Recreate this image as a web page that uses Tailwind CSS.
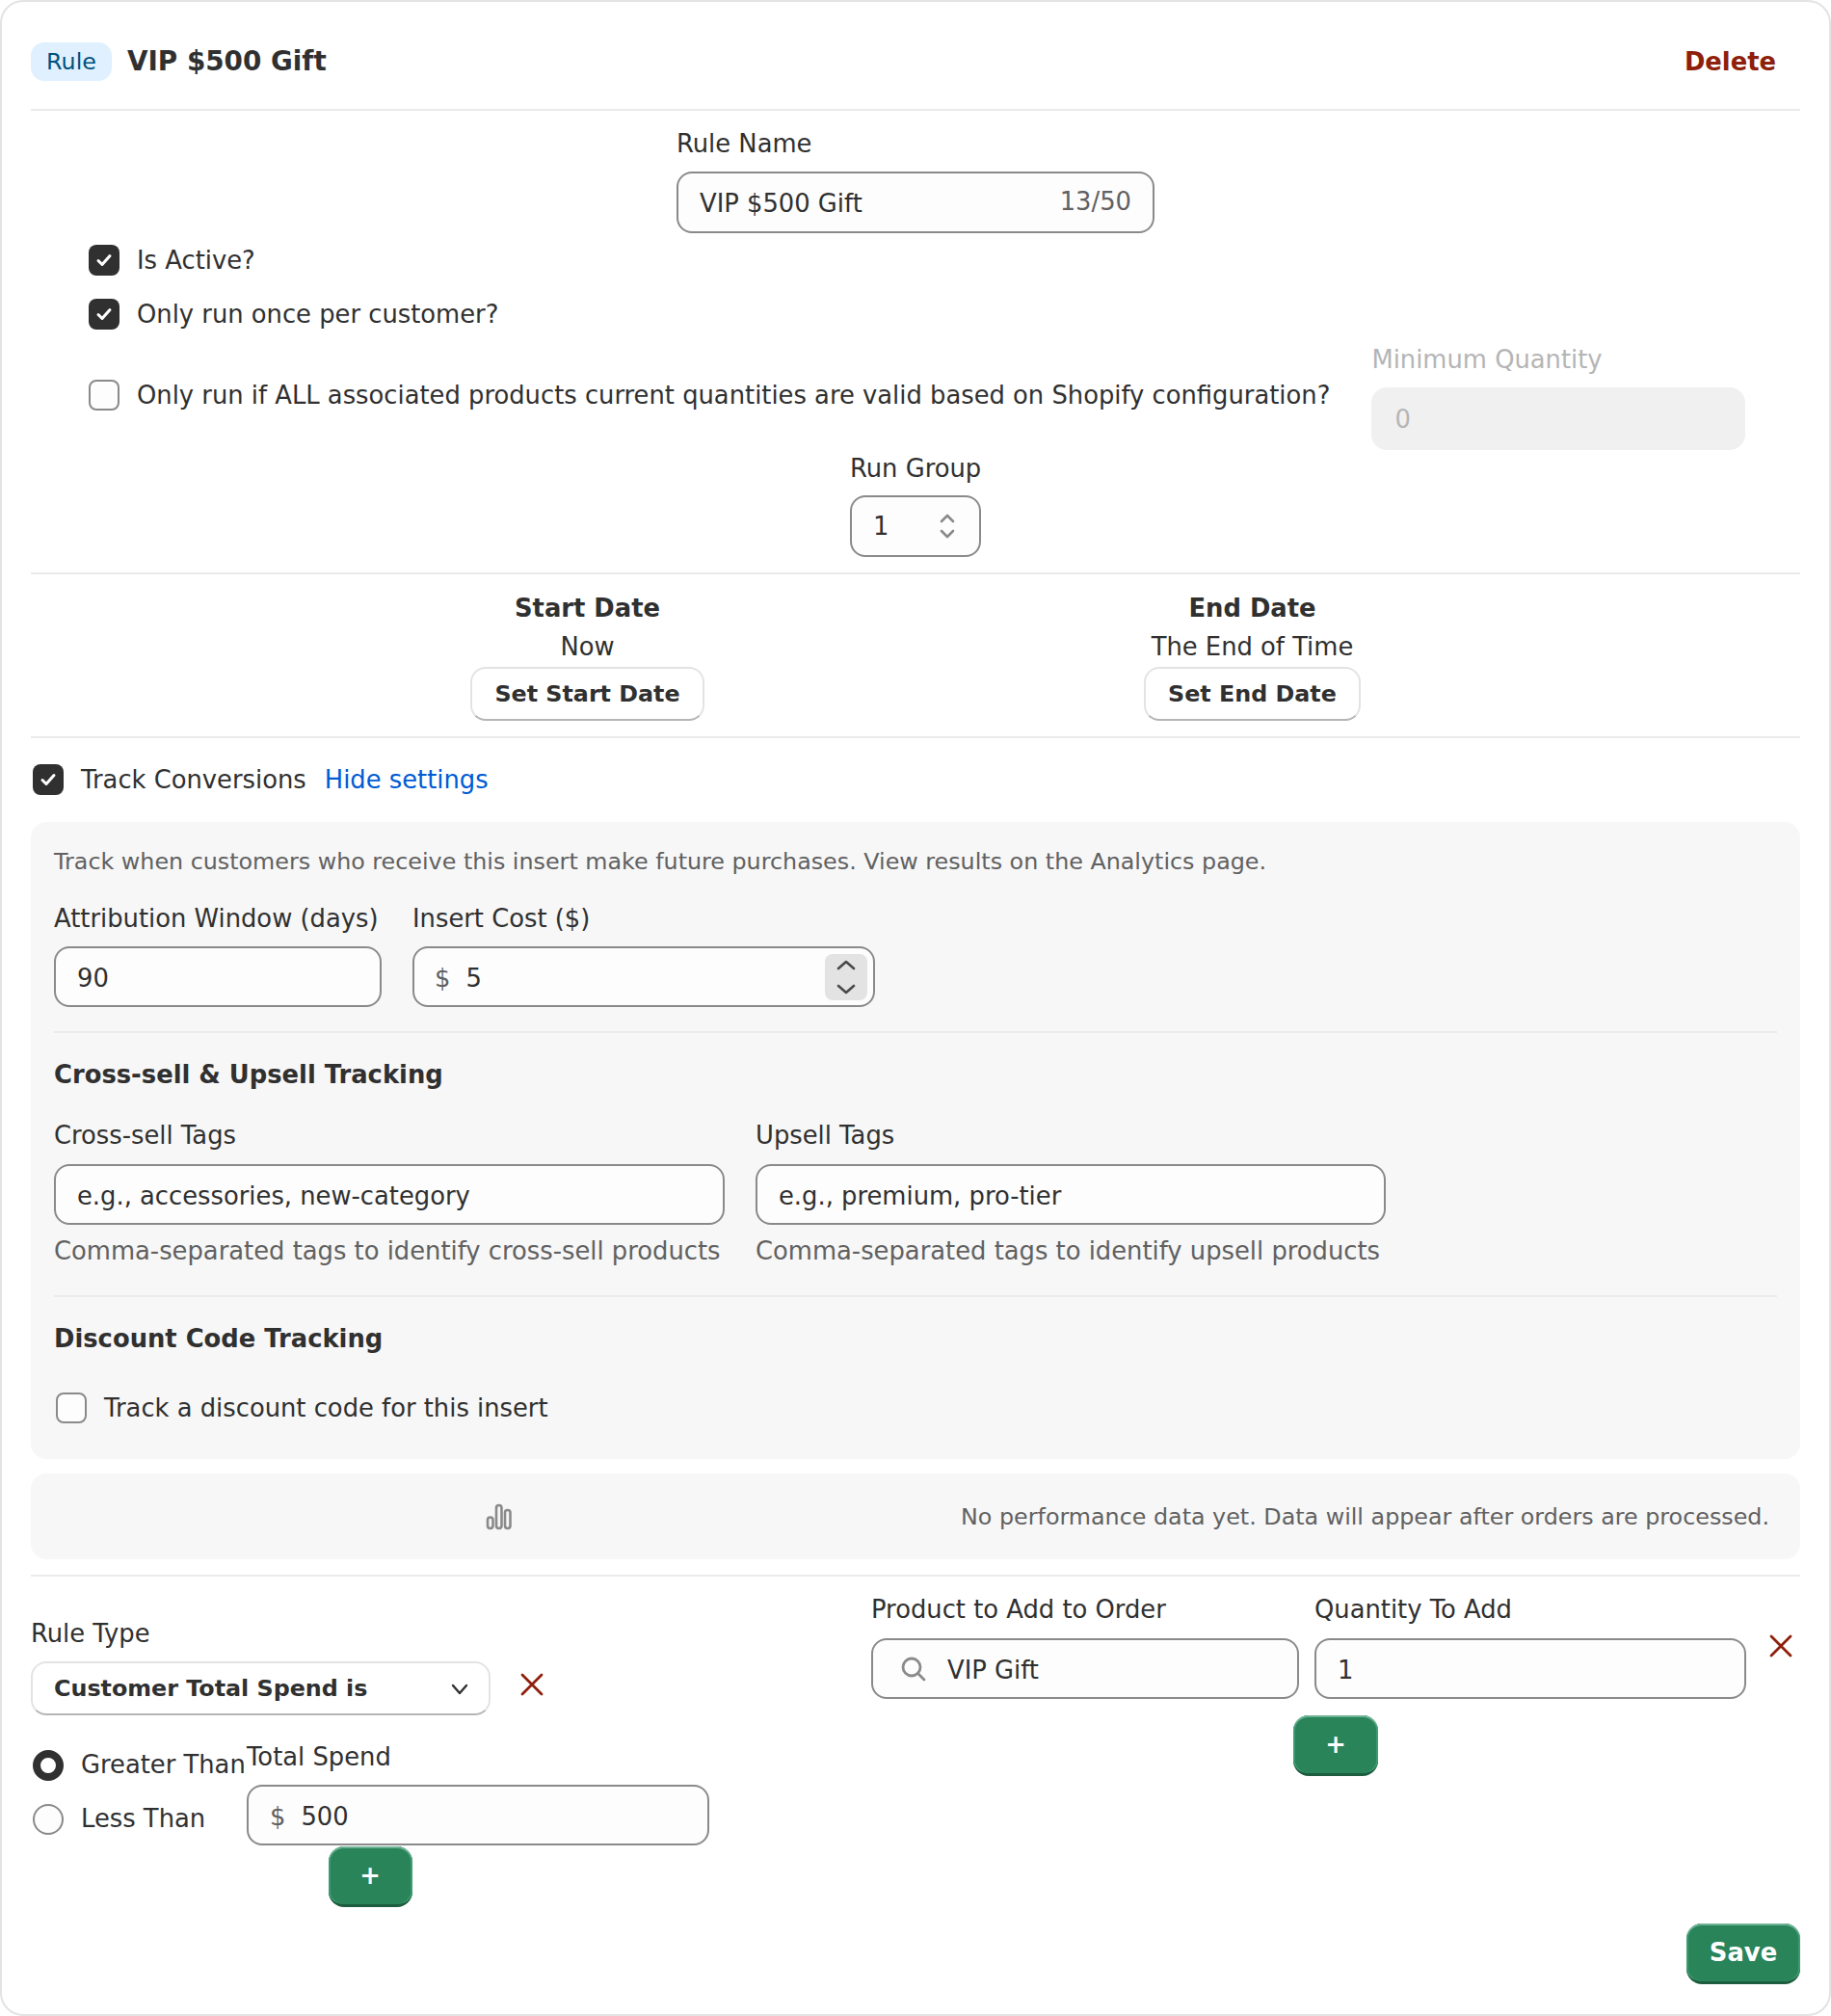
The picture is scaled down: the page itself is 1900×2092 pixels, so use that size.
<!DOCTYPE html>
<html lang="en">
<head>
<meta charset="utf-8">
<title>Rule</title>
<script src="https://cdn.jsdelivr.net/npm/@tailwindcss/browser@4"></script>
</head>
<body class="bg-white font-['DejaVu_Sans',sans-serif] text-[#303030] text-[25.8px] leading-[32px]">
<div class="w-[1900px] h-[2092px] box-border border-2 border-[#e3e3e3] rounded-[24px] px-[30px] pt-[42px] bg-white overflow-hidden">

  <!-- header -->
  <div class="flex items-center justify-between pb-[29px] border-b-2 border-[#ebebeb]">
    <div class="flex items-center">
      <span class="h-[40px] w-[84px] rounded-[14px] bg-[#e0f0ff] text-[#00527c] text-[23.8px] flex items-center justify-center">Rule</span>
      <span class="ml-[16px] font-bold text-[27.8px]">VIP $500 Gift</span>
    </div>
    <button class="mr-[25px] font-bold text-[#8e1f0b] text-[25.8px]">Delete</button>
  </div>

  <!-- rule name -->
  <div class="w-[496px] mx-auto mt-[18px]">
    <div>Rule Name</div>
    <div class="mt-[13px] h-[64px] px-[22px] flex items-center justify-between border-2 border-[#8a8a8a] rounded-[16px] bg-[#fdfdfd]">
      <span class="mt-[2px]">VIP $500 Gift</span><span class="text-[#616161] -mt-[3px]">13/50</span>
    </div>
  </div>

  <!-- checkboxes -->
  <div class="pl-[60px] mt-[12px] flex flex-col gap-[24px]">
    <label class="flex items-center gap-[18px] h-[32px]">
      <span class="w-[32px] h-[32px] rounded-[8px] bg-[#303030] flex items-center justify-center"><svg width="20" height="20" viewBox="0 0 20 20" fill="none" stroke="#fff" stroke-width="3" stroke-linecap="round" stroke-linejoin="round"><path d="M4 10.5l4 4 8-9"/></svg></span>
      <span>Is Active?</span>
    </label>
    <label class="flex items-center gap-[18px] h-[32px]">
      <span class="w-[32px] h-[32px] rounded-[8px] bg-[#303030] flex items-center justify-center"><svg width="20" height="20" viewBox="0 0 20 20" fill="none" stroke="#fff" stroke-width="3" stroke-linecap="round" stroke-linejoin="round"><path d="M4 10.5l4 4 8-9"/></svg></span>
      <span>Only run once per customer?</span>
    </label>
  </div>
  <div class="pl-[60px] mt-[15px] flex items-center">
    <label class="flex items-center gap-[18px] -mt-[4px]">
      <span class="w-[32px] h-[32px] rounded-[8px] bg-[#fdfdfd] border-2 border-[#8a8a8a] box-border"></span>
      <span class="whitespace-nowrap">Only run if ALL associated products current quantities are valid based on Shopify configuration?</span>
    </label>
    <div class="ml-[43px] w-[388px] text-[#b5b5b5]">
      <div>Minimum Quantity</div>
      <div class="mt-[13px] h-[65px] px-[24px] flex items-center rounded-[16px] bg-[#f0f0f0]">0</div>
    </div>
  </div>

  <!-- run group -->
  <div class="w-[136px] mx-auto mt-[3px]">
    <div class="text-center whitespace-nowrap">Run Group</div>
    <div class="mt-[12px] h-[64px] pl-[22px] pr-[23px] flex items-center justify-between border-2 border-[#8a8a8a] rounded-[16px] bg-[#fdfdfd]">
      <span>1</span>
      <svg width="20" height="30" viewBox="0 0 20 30" fill="none" stroke="#8a8a8a" stroke-width="2.6" stroke-linecap="round" stroke-linejoin="round"><path d="M4 10l6-6 6 6M4 20l6 6 6-6"/></svg>
    </div>
  </div>

  <!-- dates -->
  <div class="mt-[16px] border-t-2 border-[#ebebeb] pt-[19px] pb-[16px] flex justify-evenly border-b-2">
    <div class="flex flex-col items-center">
      <div class="font-bold">Start Date</div>
      <div class="mt-[8px]">Now</div>
      <button class="mt-[5px] h-[56px] w-[243px] rounded-[16px] bg-white font-bold text-[23.8px] border-2 border-[#e3e3e3] border-b-[#b5b5b5]">Set Start Date</button>
    </div>
    <div class="flex flex-col items-center">
      <div class="font-bold">End Date</div>
      <div class="mt-[8px]">The End of Time</div>
      <button class="mt-[5px] h-[56px] w-[225px] rounded-[16px] bg-white font-bold text-[23.8px] border-2 border-[#e3e3e3] border-b-[#b5b5b5]">Set End Date</button>
    </div>
  </div>

  <!-- track conversions -->
  <div class="mt-[27px] ml-[2px] flex items-center h-[32px]">
    <span class="w-[32px] h-[32px] rounded-[8px] bg-[#303030] flex items-center justify-center"><svg width="20" height="20" viewBox="0 0 20 20" fill="none" stroke="#fff" stroke-width="3" stroke-linecap="round" stroke-linejoin="round"><path d="M4 10.5l4 4 8-9"/></svg></span>
    <span class="ml-[18px]">Track Conversions</span>
    <a class="ml-[19px] text-[#005bd3]">Hide settings</a>
  </div>

  <div class="mt-[28px] h-[661px] rounded-[16px] bg-[#f7f7f7] px-[24px] pt-[25px]">
    <div class="text-[#616161] text-[23.8px]">Track when customers who receive this insert make future purchases. View results on the Analytics page.</div>
    <div class="mt-[27px] flex gap-[32px]">
      <div class="w-[340px]">
        <div class="whitespace-nowrap">Attribution Window (days)</div>
        <div class="mt-[13px] h-[63px] pt-[2px] px-[22px] flex items-center border-2 border-[#8a8a8a] rounded-[16px] bg-[#fdfdfd]">90</div>
      </div>
      <div class="w-[480px]">
        <div>Insert Cost ($)</div>
        <div class="mt-[13px] h-[63px] pl-[21px] pr-[6px] flex items-center border-2 border-[#8a8a8a] rounded-[16px] bg-[#fdfdfd]">
          <span class="text-[#616161] pt-[2px]">$</span><span class="ml-[16px] pt-[2px]">5</span>
          <span class="ml-auto w-[44px] h-[48px] rounded-[8px] bg-[#e3e3e3] flex items-center justify-center">
            <svg width="24" height="40" viewBox="0 0 24 40" fill="none" stroke="#4a4a4a" stroke-width="2.6" stroke-linecap="round" stroke-linejoin="round"><path d="M4 11l8-7 8 7M4 29l8 7 8-7"/></svg>
          </span>
        </div>
      </div>
    </div>
    <div class="mt-[25px] border-t-2 border-[#ebebeb] pt-[27px] font-bold">Cross-sell &amp; Upsell Tracking</div>
    <div class="mt-[31px] flex gap-[32px]">
      <div class="w-[696px]">
        <div>Cross-sell Tags</div>
        <div class="mt-[14px] h-[63px] pt-[2px] px-[22px] flex items-center border-2 border-[#8a8a8a] rounded-[16px] bg-[#fdfdfd]">e.g., accessories, new-category</div>
        <div class="mt-[11px] text-[#616161] whitespace-nowrap">Comma-separated tags to identify cross-sell products</div>
      </div>
      <div class="w-[654px]">
        <div>Upsell Tags</div>
        <div class="mt-[14px] h-[63px] pt-[2px] px-[22px] flex items-center border-2 border-[#8a8a8a] rounded-[16px] bg-[#fdfdfd]">e.g., premium, pro-tier</div>
        <div class="mt-[11px] text-[#616161] whitespace-nowrap">Comma-separated tags to identify upsell products</div>
      </div>
    </div>
    <div class="mt-[30px] border-t-2 border-[#ebebeb] pt-[27px] font-bold">Discount Code Tracking</div>
    <label class="mt-[40px] ml-[2px] flex items-center gap-[18px]">
      <span class="w-[32px] h-[32px] rounded-[8px] bg-[#fdfdfd] border-2 border-[#8a8a8a] box-border"></span>
      <span>Track a discount code for this insert</span>
    </label>
  </div>

  <!-- performance -->
  <div class="mt-[15px] h-[89px] rounded-[16px] bg-[#f7f7f7] flex items-center pl-[472px] pr-[32px]">
    <svg width="28" height="28" viewBox="0 0 28 28" fill="none" stroke="#8a8a8a" stroke-width="2.6"><rect x="2" y="14.5" width="5.5" height="11.5" rx="2.75"/><rect x="11" y="2" width="5.5" height="24" rx="2.75"/><rect x="20" y="7" width="5.5" height="19" rx="2.75"/></svg>
    <span class="ml-auto text-[#616161] text-[23.8px]">No performance data yet. Data will appear after orders are processed.</span>
  </div>

  <!-- rule -->
  <div class="mt-[16px] border-t-2 border-[#ebebeb] flex items-start">
    <div class="w-[872px]">
      <div class="w-[704px] flex flex-col items-center">
        <div class="w-full mt-[43px]">Rule Type</div>
        <div class="w-full mt-[13px] flex items-center">
          <div class="w-[477px] h-[56px] box-border pl-[22px] pr-[20px] flex items-center justify-between rounded-[16px] bg-white border-2 border-[#e3e3e3] border-b-[#b5b5b5] font-bold text-[23.8px]">
            <span>Customer Total Spend is</span>
            <svg width="20" height="20" viewBox="0 0 20 20" fill="none" stroke="#303030" stroke-width="2.4" stroke-linecap="round" stroke-linejoin="round"><path d="M3 7l7 8 7-8"/></svg>
          </div>
          <svg class="ml-[30px] -mt-[8px]" width="26" height="26" viewBox="0 0 26 26" fill="none" stroke="#8e1f0b" stroke-width="2.8" stroke-linecap="round"><path d="M3 3l20 20M23 3L3 23"/></svg>
        </div>
        <div class="w-full mt-[27px] flex items-start">
          <div class="w-[224px] flex flex-col gap-[24px] pl-[2px] pt-[9px]">
            <label class="flex items-center gap-[18px] h-[32px]">
              <span class="w-[32px] h-[32px] rounded-full bg-white border-[8px] border-[#303030] box-border"></span>
              <span class="whitespace-nowrap -mt-[2px]">Greater Than</span>
            </label>
            <label class="flex items-center gap-[18px] h-[32px]">
              <span class="w-[32px] h-[32px] rounded-full bg-[#fdfdfd] border-2 border-[#8a8a8a] box-border"></span>
              <span class="whitespace-nowrap -mt-[2px]">Less Than</span>
            </label>
          </div>
          <div class="w-[480px]">
            <div>Total Spend</div>
            <div class="mt-[13px] h-[63px] pl-[22px] flex items-center border-2 border-[#8a8a8a] rounded-[16px] bg-[#fdfdfd]">
              <span class="text-[#616161] pt-[2px]">$</span><span class="ml-[16px] pt-[2px]">500</span>
            </div>
          </div>
        </div>
        <button class="mt-[1px] w-[87px] h-[63px] rounded-[16px] bg-[#29845a] text-white font-bold text-[25.8px] border-b-[3px] border-[#1c5c3f] shadow-[inset_0_2px_0_#6fb396,inset_2px_0_0_#3f9a70,inset_-2px_0_0_#3f9a70]">+</button>
      </div>
    </div>
    <div class="w-[964px] flex flex-col items-center">
      <div class="w-full mt-[18px] flex items-start">
        <div class="w-[444px]">
          <div>Product to Add to Order</div>
          <div class="mt-[14px] h-[63px] px-[28px] flex items-center border-2 border-[#8a8a8a] rounded-[16px] bg-[#fdfdfd]">
            <svg width="28" height="28" viewBox="0 0 28 28" fill="none" stroke="#8a8a8a" stroke-width="2.8" stroke-linecap="round"><circle cx="12" cy="12" r="9"/><path d="M19 19l6 6"/></svg>
            <span class="ml-[21px] pt-[2px]">VIP Gift</span>
          </div>
        </div>
        <div class="ml-[16px] w-[448px]">
          <div>Quantity To Add</div>
          <div class="mt-[14px] h-[63px] pt-[2px] px-[22px] flex items-center border-2 border-[#8a8a8a] rounded-[16px] bg-[#fdfdfd]">1</div>
        </div>
        <svg class="ml-[23px] mt-[41px]" width="26" height="26" viewBox="0 0 26 26" fill="none" stroke="#8e1f0b" stroke-width="2.8" stroke-linecap="round"><path d="M3 3l20 20M23 3L3 23"/></svg>
      </div>
      <button class="mt-[17px] w-[88px] h-[63px] rounded-[16px] bg-[#29845a] text-white font-bold text-[25.8px] border-b-[3px] border-[#1c5c3f] shadow-[inset_0_2px_0_#6fb396,inset_2px_0_0_#3f9a70,inset_-2px_0_0_#3f9a70]">+</button>
    </div>
  </div>

  <!-- save -->
  <div class="flex justify-end mt-[17px]">
    <button class="w-[118px] h-[63px] rounded-[16px] bg-[#29845a] text-white font-bold text-[25.8px] border-b-[3px] border-[#1c5c3f] shadow-[inset_0_2px_0_#6fb396,inset_2px_0_0_#3f9a70,inset_-2px_0_0_#3f9a70]">Save</button>
  </div>
</div>
</body>
</html>
